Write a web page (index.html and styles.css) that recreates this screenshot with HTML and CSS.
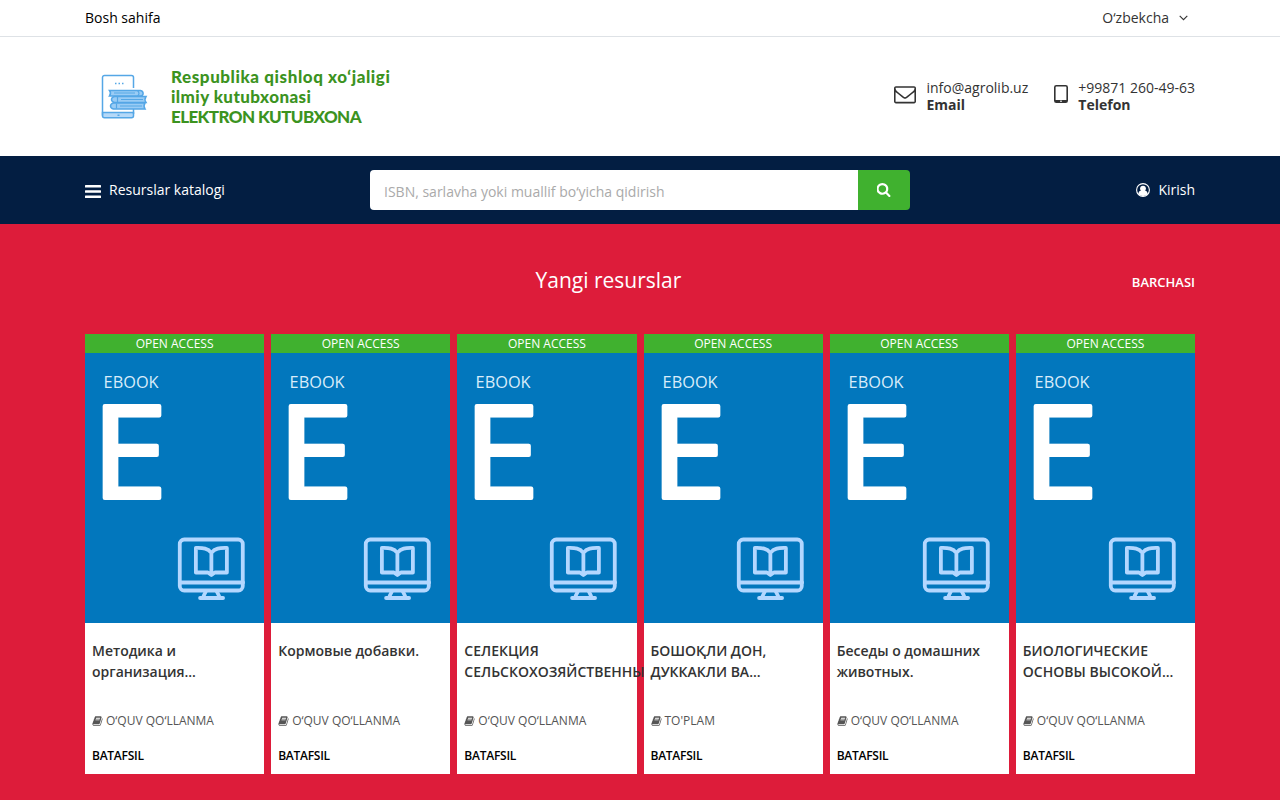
FILE: index.html
```
<!DOCTYPE html>
<html lang="uz">
<head>
  <meta charset="UTF-8">
  <meta name="viewport" content="width=device-width, initial-scale=1.0">
  <title>Elektron kutubxona</title>
  <link rel="stylesheet" href="styles.css">
</head>
<body>
  <svg class="sprite" aria-hidden="true">
    <symbol id="icon-book" viewBox="0 0 1792 1792">
      <path d="M1703 478q40 57 18 129l-275 906q-19 64-76.500 107.500t-122.500 43.500h-923q-77 0-148.500-53.500t-99.500-131.500q-24-67-2-127 0-4 3-27t4-37q1-8-3-21.500t-3-19.500q2-11 8-21t16.500-23.500 16.500-23.500q23-38 45-91.500t30-91.500q3-10 .5-30t-.5-28q3-11 17-28t17-23q21-36 42-92t25-90q1-9-2.500-32t.5-28q4-13 22-30.500t22-22.500q19-26 42.500-84.500t27.500-96.500q1-8-3-25.500t-2-26.500q2-8 9-18t18-23 17-21q8-12 16.500-30.500t15-35 16-36 19.500-32 26.500-23.500 36-11.500 47.500 5.500l-1 3q38-9 51-9h761q74 0 114 56t18 130l-274 906q-36 119-71.500 153.500t-128.500 34.500h-869q-27 0-38 15-11 16-1 43 24 70 144 70h923q29 0 56-15.500t35-41.500l300-987q7-22 5-57 38 15 59 43zm-1064 2q-4 13 2 22.500t20 9.500h608q13 0 25.500-9.500t16.500-22.500l21-64q4-13-2-22.500t-20-9.500h-608q-13 0-25.500 9.500t-16.500 22.500zm-83 256q-4 13 2 22.500t20 9.500h608q13 0 25.500-9.500t16.500-22.500l21-64q4-13-2-22.500t-20-9.500h-608q-13 0-25.500 9.500t-16.500 22.500z"/>
    </symbol>
    <symbol id="icon-ebook" viewBox="0 0 179 270">
      <g fill="none" stroke="#b3d7ff" stroke-width="3.800" stroke-linejoin="round" stroke-linecap="round">
        <rect x="94.700" y="186.500" width="63" height="51" rx="4.500"/>
        <path d="M95 229.500h63M121 238l-2.500 5M131.500 238l2.500 5M115 245h23"/>
        <path d="M126.300 200c-3.500-4.800-8-5.200-15.500-5v24.500h12l3.500 2.500 3.500-2.500h12V195c-7.500-.2-12 .2-15.500 5zv20"/>
      </g>
    </symbol>
  </svg>

  <div class="topbar">
    <div class="container row">
      <a class="home">Bosh sahifa</a>
      <a class="lang">O‘zbekcha
        <svg width="9" height="6" viewBox="0 0 9 6"><path d="M.7.8l3.800 3.800L8.300.8" fill="none" stroke="#333" stroke-width="1.100"/></svg>
      </a>
    </div>
  </div>

  <header class="header">
    <div class="container row">
      <a class="logo">
        <svg width="48" height="46" viewBox="0 0 48 46" fill="none" stroke="#55a7e6" stroke-width="1.500">
          <path d="M2.500 38.500h31v3.300a2 2 0 0 1-2 2h-27a2 2 0 0 1-2-2z" fill="#b5d9f8"/>
          <path d="M33.500 14V3.500a2 2 0 0 0-2-2h-27a2 2 0 0 0-2 2v38M33.500 35v5"/>
          <path d="M15 9.500h1.500M18.500 9.500H20M22 9.500h1.500M17.500 41.300h2"/>
          <g fill="#9accf5">
            <path d="M9.500 16.500h31c3.500 1 3.500 5 0 5.500h-31q2-3 0-5.500z"/>
            <path d="M46 22.500H14.500c-4 1-4 5 0 6H46q-2-3 0-6z"/>
            <path d="M45 29H13.500c-4 1-4 5 0 6H45q-2-3 0-6z"/>
          </g>
          <path d="M37.500 16.500q3 3 0 5.500M17.500 23v5M16.500 29.500v5M14 19h21M21 25.500h22M20 32h22" stroke-width="1.200"/>
        </svg>
        <span class="logo-text">
          <span class="logo-l1">Respublika qishloq xo‘jaligi</span>
          <span class="logo-l2">ilmiy kutubxonasi</span>
          <span class="logo-l3">ELEKTRON KUTUBXONA</span>
        </span>
      </a>
      <div class="contacts">
        <div class="contact">
          <svg width="22" height="22" viewBox="0 0 1792 1792" fill="#333"><path d="M1664 1504v-768q-32 36-69 66-268 206-426 338-51 43-83 67t-86.500 48.500-102.500 24.500h-2q-48 0-102.500-24.500t-86.500-48.500-83-67q-158-132-426-338-37-30-69-66v768q0 13 9.500 22.500t22.500 9.500h1472q13 0 22.500-9.500t9.500-22.500zm0-1051v-24.500l-.5-13-3-12.500-5.500-9-9-7.500-14-2.500h-1472q-13 0-22.500 9.500t-9.500 22.500q0 168 147 284 193 152 401 317 6 5 35 29.500t46 37.500 44.500 31.500 50.500 27.500 43 9h2q20 0 43-9t50.500-27.500 44.500-31.500 46-37.500 35-29.500q208-165 401-317 54-43 100.500-115.500t46.500-131.500zm128-37v1088q0 66-47 113t-113 47h-1472q-66 0-113-47t-47-113v-1088q0-66 47-113t113-47h1472q66 0 113 47t47 113z"/></svg>
          <div>info@agrolib.uz<br><strong>Email</strong></div>
        </div>
        <div class="contact">
          <svg class="tablet" width="14" height="18" viewBox="0 0 14 18"><rect x=".8" y=".8" width="12.400" height="16.400" rx="1.500" fill="none" stroke="#333" stroke-width="1.600"/><path d="M1 15h12v2H1z" fill="#333"/><path d="M6 16.200h2" stroke="#fff"/></svg>
          <div>+99871 260-49-63<br><strong>Telefon</strong></div>
        </div>
      </div>
    </div>
  </header>

  <nav class="navbar">
    <div class="container row">
      <a class="catalog">
        <svg width="16" height="13" viewBox="0 0 16 13" fill="#fff"><rect width="16" height="2.500" rx=".5"/><rect y="5.300" width="16" height="2.500" rx=".5"/><rect y="10.500" width="16" height="2.500" rx=".5"/></svg>
        <span>Resurslar katalogi</span>
      </a>
      <form class="search">
        <input type="text" placeholder="ISBN, sarlavha yoki muallif bo‘yicha qidirish">
        <button type="button" aria-label="Qidirish">
          <svg width="14" height="14" viewBox="64 128 1664 1664" fill="#fff"><path d="M1152 832q0-185-131.500-316.500t-316.500-131.500-316.500 131.500-131.500 316.500 131.500 316.500 316.500 131.500 316.500-131.500 131.500-316.500zm512 832q0 52-38 90t-90 38q-54 0-90-38l-343-342q-179 124-399 124-143 0-273.500-55.500t-225-150-150-225-55.500-273.500 55.500-273.500 150-225 225-150 273.500-55.500 273.500 55.500 225 150 150 225 55.500 273.500q0 220-124 399l343 343q37 37 37 90z"/></svg>
        </button>
      </form>
      <a class="login">
        <svg width="14" height="14" viewBox="0 0 14 14"><circle cx="7" cy="7" r="6.400" fill="none" stroke="#fff" stroke-width="1.100"/><circle cx="7" cy="5.600" r="2.900" fill="#fff"/><path d="M2.300 11c.2-2 1-3.300 2.300-3.300h4.800c1.300 0 2.100 1.300 2.300 3.300C10 13.600 4 13.600 2.300 11z" fill="#fff"/></svg>
        <span>Kirish</span>
      </a>
    </div>
  </nav>

  <section class="resources">
    <div class="container">
      <div class="heading">
        <h2>Yangi resurslar</h2>
        <a>BARCHASI</a>
      </div>
      <div class="books">
        <article class="book">
          <div class="access">OPEN ACCESS</div>
          <svg class="cover" viewBox="0 0 179 270">
            <text class="cover-kind" x="18.500" y="35" textLength="55" lengthAdjust="spacingAndGlyphs">EBOOK</text>
            <text class="cover-letter" transform="translate(6.300 145) scale(1.060 1)">E</text>
            <use href="#icon-ebook"/>
          </svg>
          <h3>Методика и организация...</h3>
          <p><svg class="icon"><use href="#icon-book"/></svg> O‘QUV QO‘LLANMA</p>
          <a>BATAFSIL</a>
        </article>
        <article class="book">
          <div class="access">OPEN ACCESS</div>
          <svg class="cover" viewBox="0 0 179 270">
            <text class="cover-kind" x="18.500" y="35" textLength="55" lengthAdjust="spacingAndGlyphs">EBOOK</text>
            <text class="cover-letter" transform="translate(6.300 145) scale(1.060 1)">E</text>
            <use href="#icon-ebook"/>
          </svg>
          <h3>Кормовые добавки.</h3>
          <p><svg class="icon"><use href="#icon-book"/></svg> O‘QUV QO‘LLANMA</p>
          <a>BATAFSIL</a>
        </article>
        <article class="book">
          <div class="access">OPEN ACCESS</div>
          <svg class="cover" viewBox="0 0 179 270">
            <text class="cover-kind" x="18.500" y="35" textLength="55" lengthAdjust="spacingAndGlyphs">EBOOK</text>
            <text class="cover-letter" transform="translate(6.300 145) scale(1.060 1)">E</text>
            <use href="#icon-ebook"/>
          </svg>
          <h3>СЕЛЕКЦИЯ СЕЛЬСКОХОЗЯЙСТВЕННЫ</h3>
          <p><svg class="icon"><use href="#icon-book"/></svg> O‘QUV QO‘LLANMA</p>
          <a>BATAFSIL</a>
        </article>
        <article class="book">
          <div class="access">OPEN ACCESS</div>
          <svg class="cover" viewBox="0 0 179 270">
            <text class="cover-kind" x="18.500" y="35" textLength="55" lengthAdjust="spacingAndGlyphs">EBOOK</text>
            <text class="cover-letter" transform="translate(6.300 145) scale(1.060 1)">E</text>
            <use href="#icon-ebook"/>
          </svg>
          <h3>БОШОҚЛИ ДОН, ДУККАКЛИ ВА...</h3>
          <p><svg class="icon"><use href="#icon-book"/></svg> TO'PLAM</p>
          <a>BATAFSIL</a>
        </article>
        <article class="book">
          <div class="access">OPEN ACCESS</div>
          <svg class="cover" viewBox="0 0 179 270">
            <text class="cover-kind" x="18.500" y="35" textLength="55" lengthAdjust="spacingAndGlyphs">EBOOK</text>
            <text class="cover-letter" transform="translate(6.300 145) scale(1.060 1)">E</text>
            <use href="#icon-ebook"/>
          </svg>
          <h3>Беседы о домашних животных.</h3>
          <p><svg class="icon"><use href="#icon-book"/></svg> O‘QUV QO‘LLANMA</p>
          <a>BATAFSIL</a>
        </article>
        <article class="book">
          <div class="access">OPEN ACCESS</div>
          <svg class="cover" viewBox="0 0 179 270">
            <text class="cover-kind" x="18.500" y="35" textLength="55" lengthAdjust="spacingAndGlyphs">EBOOK</text>
            <text class="cover-letter" transform="translate(6.300 145) scale(1.060 1)">E</text>
            <use href="#icon-ebook"/>
          </svg>
          <h3>БИОЛОГИЧЕСКИЕ ОСНОВЫ ВЫСОКОЙ...</h3>
          <p><svg class="icon"><use href="#icon-book"/></svg> O‘QUV QO‘LLANMA</p>
          <a>BATAFSIL</a>
        </article>
      </div>
    </div>
  </section>
</body>
</html>
```
FILE: styles.css
```
* { box-sizing: border-box; }
body {
  margin: 0;
  height: 800px;
  overflow: hidden;
  font-family: 'Open Sans', sans-serif;
  font-size: 14px;
  line-height: 17px;
  color: #333;
  background: #dd1c3a;
}
svg { flex: none; }
.sprite {
  position: absolute;
  width: 0;
  height: 0;
}
.container {
  width: 1110px;
  margin: 0 auto;
}
.row {
  display: flex;
  align-items: center;
  justify-content: space-between;
  height: 100%;
}

/* top bar */
.topbar {
  height: 37px;
  padding-bottom: 2px;
  background: #fff;
  border-bottom: 1px solid #dee2e6;
}
.home { color: #000; }
.lang {
  display: flex;
  align-items: center;
  gap: 10px;
  padding-right: 7px;
}
.lang svg { margin-top: 2px; }

/* header */
.header {
  height: 119px;
  background: #fff;
}
.logo {
  display: flex;
  align-items: center;
  gap: 22px;
  padding-left: 15px;
}
.logo-text {
  display: flex;
  flex-direction: column;
  padding-left: 1px;
  font-family: Lato, sans-serif;
  font-size: 17px;
  font-weight: 900;
  line-height: 20px;
  color: #3c931f;
  white-space: nowrap;
}
.logo-l1 { letter-spacing: .58px; }
.logo-l2 { letter-spacing: .42px; }
.logo-l3 { letter-spacing: -.6px; }
.contacts {
  display: flex;
  gap: 26px;
  padding-bottom: 2px;
}
.contact {
  display: flex;
  align-items: center;
  gap: 10px;
}
.contact svg { margin-bottom: 3px; }
.contact .tablet { margin-bottom: 4px; }

/* navbar */
.navbar {
  height: 68px;
  background: #031e42;
}
.navbar a {
  display: flex;
  align-items: center;
  gap: 8px;
  width: 285px;
  color: #fff;
}
.navbar .login { justify-content: flex-end; }
.navbar span { padding-bottom: 2px; }
.catalog svg { margin-top: 3px; }
.search {
  display: flex;
  width: 540px;
  height: 40px;
  border-radius: 4px;
  overflow: hidden;
}
.search input {
  flex: 1;
  border: 0;
  padding: 2px 14px 0;
  font: inherit;
}
.search input::placeholder { color: #aaa; }
.search button {
  display: flex;
  align-items: center;
  justify-content: center;
  width: 52px;
  border: 0;
  background: #40b12f;
}

/* resources */
.heading {
  display: grid;
  grid-template-columns: 1fr auto;
  align-items: center;
  height: 110px;
  padding-top: 2px;
  color: #fff;
}
.heading h2 {
  margin: 0;
  font-size: 21px;
  font-weight: 400;
  line-height: 28px;
  text-align: center;
}
.heading a {
  padding-top: 4px;
  font-size: 13px;
  font-weight: 600;
}
.books {
  display: grid;
  grid-template-columns: repeat(6, minmax(0, 1fr));
  gap: 7px;
}
.book {
  height: 440px;
  background: #fff;
}
.access {
  height: 19px;
  background: #40b12f;
  color: #fff;
  font-size: 12px;
  line-height: 19px;
  text-align: center;
}
.cover {
  display: block;
  width: 100%;
  height: 270px;
  background: #0277bd;
}
.cover-kind {
  font-size: 15.500px;
  fill: #d9ecfa;
}
.cover-letter {
  font-size: 129px;
  fill: #fff;
  stroke: #fff;
  stroke-width: 4px;
  stroke-linejoin: round;
}
.book h3 {
  height: 42px;
  margin: 17px 7px 0;
  font-size: 14px;
  font-weight: 600;
  line-height: 21px;
}
.book p {
  display: flex;
  align-items: center;
  gap: 3px;
  margin: 30px 7px 0;
  font-size: 12px;
  color: #555;
}
.icon {
  width: 11px;
  height: 12px;
  fill: #555;
}
.book > a {
  display: block;
  margin: 18px 7px 0;
  font-size: 12px;
  font-weight: 600;
  letter-spacing: -.25px;
  color: #000;
}
```
